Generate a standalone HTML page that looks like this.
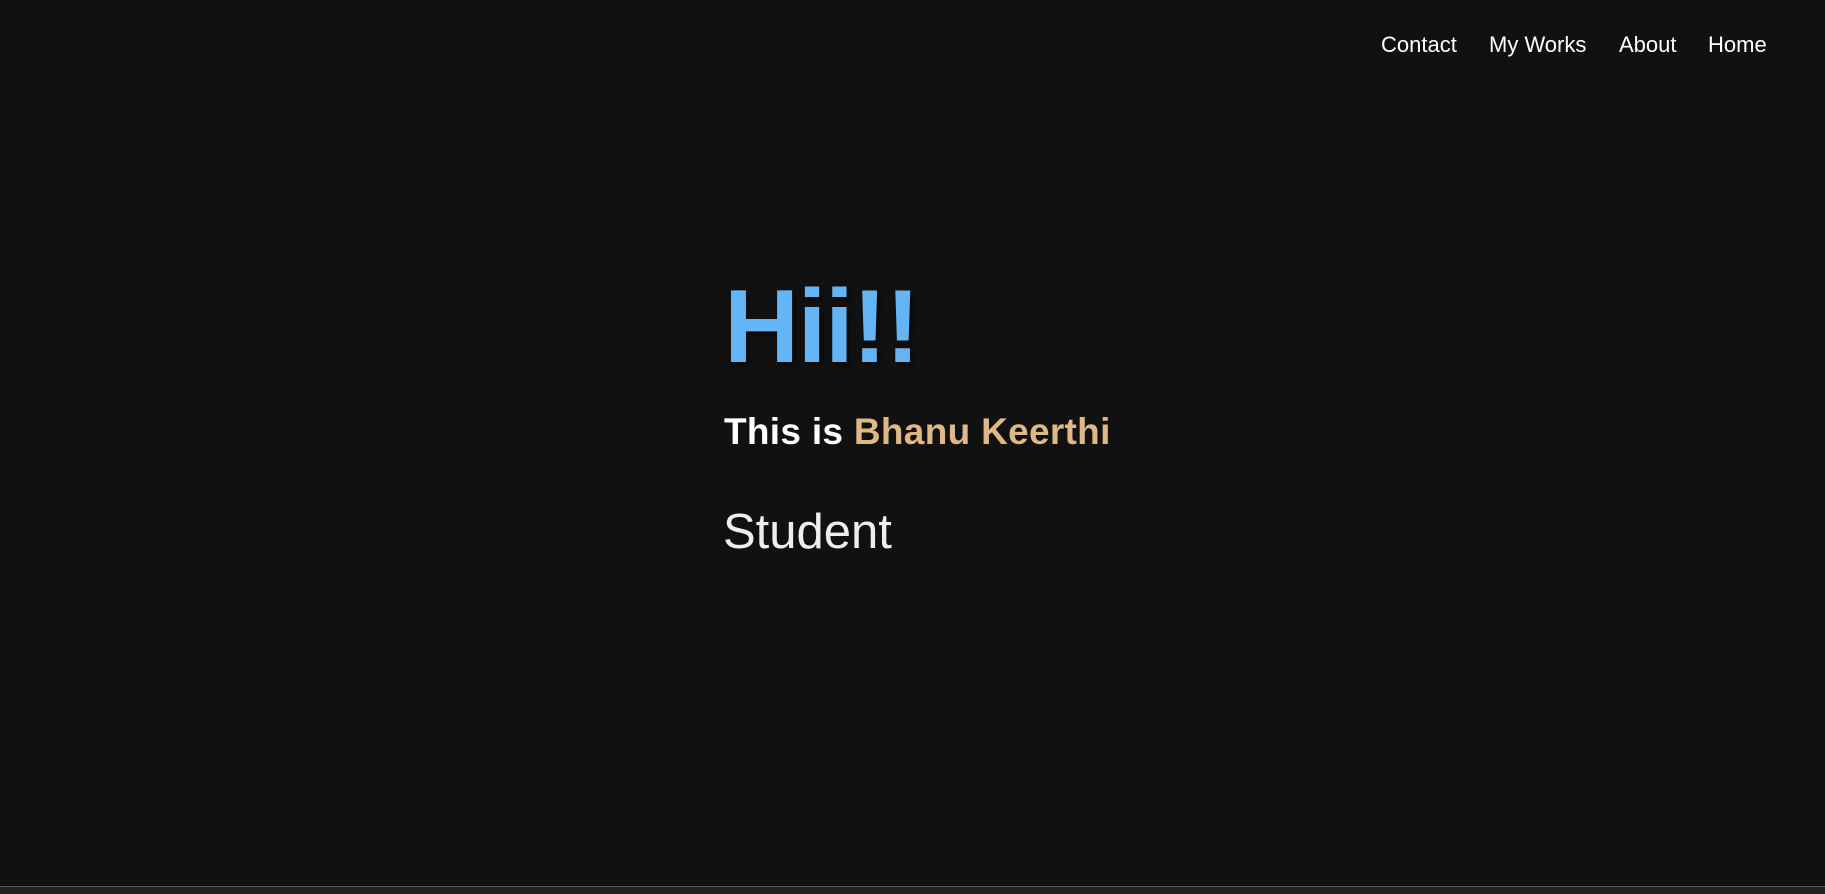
<!DOCTYPE html>
<html><head><meta charset="utf-8"><style>
html,body{margin:0;padding:0;background:#111;width:1825px;height:893px;overflow:hidden;font-family:"Liberation Sans",Arial,sans-serif}
.a{position:absolute;line-height:1;white-space:nowrap;margin:0}
.nav{color:#fff;font-size:22px;top:34px}
#h{left:724px;top:275px;font-size:104px;font-weight:bold;color:#64b5f6;letter-spacing:-1.5px;text-shadow:3px 3px 4px rgba(0,0,0,.5)}
#t{left:724px;top:413px;font-size:37px;font-weight:bold;color:#fff;letter-spacing:0.3px}
#t span{color:#deb887}
#s{left:723px;top:508px;font-size:49px;color:#eee}
#bar{position:absolute;left:0;top:886px;width:1825px;height:7px;background:#222;border-top:1px solid #555}
</style></head><body>
<div class="a nav" style="left:1381px">Contact</div>
<div class="a nav" style="left:1489px">My Works</div>
<div class="a nav" style="left:1619px">About</div>
<div class="a nav" style="left:1708px">Home</div>
<div class="a" id="h">Hii!!</div>
<div class="a" id="t">This is <span>Bhanu Keerthi</span></div>
<div class="a" id="s">Student</div>
<div id="bar"></div>
</body></html>
